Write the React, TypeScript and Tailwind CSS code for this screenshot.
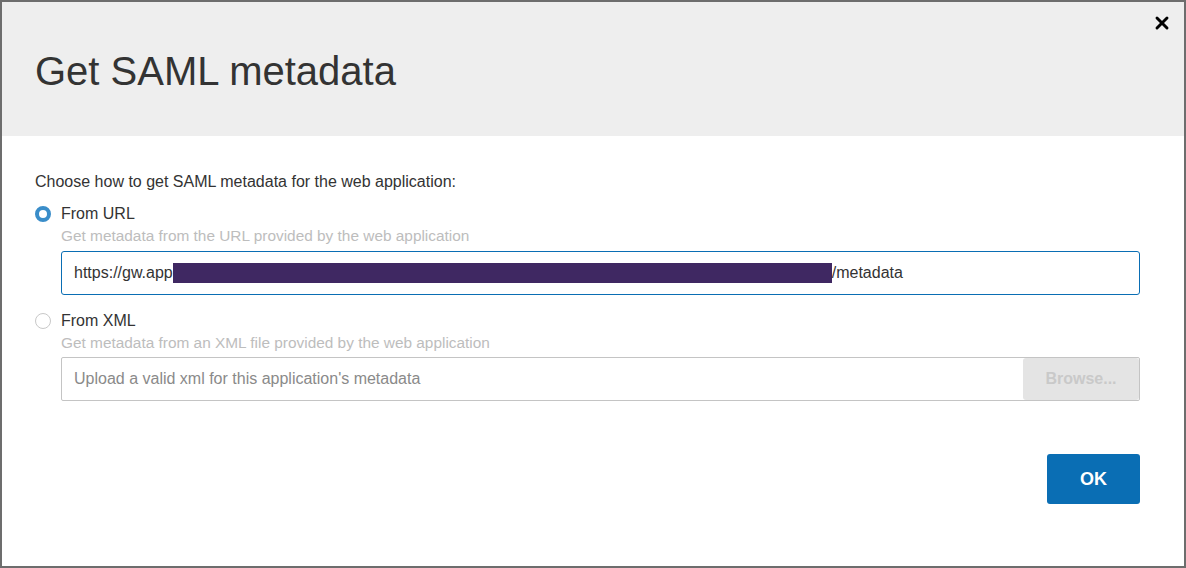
import { X } from 'lucide-react'

export default function App() {
  return (
    <div className="w-[1186px] h-[568px] bg-white border-2 border-[#6d6d6d] flex flex-col font-['Liberation_Sans',Arial,sans-serif] text-[#333]">
      <div className="relative h-[134px] bg-[#eeeeee] px-[33px] flex items-center">
        <h1 className="text-[40px] leading-none mt-[3px]">Get SAML metadata</h1>
        <button className="absolute right-[12px] top-[11px] text-black">
          <X size={20} strokeWidth={3.5} />
        </button>
      </div>

      <div className="flex flex-col pl-[33px] pr-[44px] pt-[34px]">
        <p className="text-[16px] leading-6">Choose how to get SAML metadata for the web application:</p>

        <label className="mt-2 flex items-center gap-[10px] text-[16px] leading-6">
          <span className="w-[16px] h-[16px] rounded-full border-[4.5px] border-[#3a8dc9] bg-white" />
          From URL
        </label>
        <p className="pl-[26px] text-[15.4px] leading-5 text-[#bdbdbd]">Get metadata from the URL provided by the web application</p>
        <div className="ml-[26px] mt-[5px] h-[44px] border border-[#0a6eb4] rounded-[3px] flex items-center pl-[12px] text-[16px]">
          <span>https://gw.app</span>
          <span className="w-[659px] h-[20px] bg-[#3f2862]" />
          <span>/metadata</span>
        </div>

        <label className="mt-[14px] flex items-center gap-[10px] text-[16px] leading-6">
          <span className="w-[16px] h-[16px] rounded-full border border-[#c8c8c8] bg-white" />
          From XML
        </label>
        <p className="pl-[26px] text-[15.4px] leading-5 text-[#bdbdbd]">Get metadata from an XML file provided by the web application</p>
        <div className="ml-[26px] mt-[4px] h-[44px] border border-[#c4c4c4] rounded-[2px] flex items-center">
          <span className="flex-1 pl-[12px] text-[16px] text-[#8a8a8a]">Upload a valid xml for this application's metadata</span>
          <span className="w-[116px] h-full bg-[#e4e4e4] rounded-[3px] flex items-center justify-center text-[16px] font-bold text-[#c9c9c9]">Browse...</span>
        </div>

        <div className="mt-[53px] flex justify-end">
          <button className="w-[93px] h-[50px] bg-[#0a6eb4] rounded-[3px] text-white font-bold text-[18px]">OK</button>
        </div>
      </div>
    </div>
  )
}
